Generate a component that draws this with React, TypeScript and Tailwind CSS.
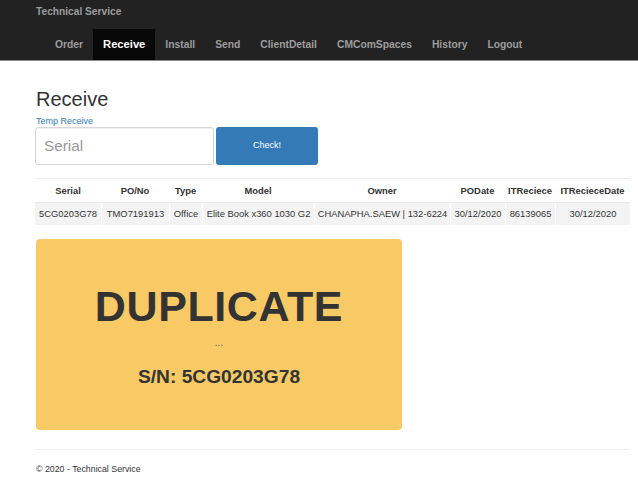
import React from "react";

const cols = [
  { h: "Serial", d: "5CG0203G78", w: 66 },
  { h: "PO/No", d: "TMO7191913", w: 68 },
  { h: "Type", d: "Office", w: 33 },
  { h: "Model", d: "Elite Book x360 1030 G2", w: 112 },
  { h: "Owner", d: "CHANAPHA.SAEW | 132-6224", w: 136 },
  { h: "PODate", d: "30/12/2020", w: 55 },
  { h: "ITReciece", d: "86139065", w: 50 },
  { h: "ITRecieceDate", d: "30/12/2020", w: 75 },
];

const navItems = ["Order", "Receive", "Install", "Send", "ClientDetail", "CMComSpaces", "History", "Logout"];

export default function App() {
  return (
    <div
      className="min-h-[482px] bg-white text-[#333]"
      style={{ fontFamily: '"Liberation Sans", Arial, sans-serif' }}
    >
      <nav className="h-[61px] bg-[#222] border-b border-[#8a8a8a]">
        <div className="pl-[36px] pt-[6px] h-[18px] text-[10.2px] leading-[12px] font-bold text-[#9d9d9d]">
          Technical Service
        </div>
        <ul className="flex ml-[45px] mt-[11px]">
          {navItems.map((n) =>
            n === "Receive" ? (
              <li
                key={n}
                className="h-[31px] px-[10px] flex items-center bg-[#080808] text-white font-bold text-[11.2px]"
              >
                {n}
              </li>
            ) : (
              <li
                key={n}
                className="h-[31px] px-[10px] flex items-center text-[#9d9d9d] font-bold text-[10.3px]"
              >
                {n}
              </li>
            )
          )}
        </ul>
      </nav>

      <main className="pl-[35px] pr-[8px]">
        <h2 className="mt-[27px] text-[20px] leading-[22px] text-[#333] pl-[1px]">Receive</h2>
        <div className="mt-[6px] text-[9px] leading-[11px] text-[#337ab7] pl-[1px]">Temp Receive</div>
        <div className="flex h-[38px] gap-[2px]">
          <div className="w-[179px] h-full border border-[#d6d6d6] rounded-[3px] bg-white flex items-center pl-[8px] text-[15.3px] text-[#999] shadow-[inset_0_1px_1px_rgba(0,0,0,0.06)]">
            Serial
          </div>
          <button className="w-[102px] h-full rounded-[3px] bg-[#337ab7] text-white text-[9px] flex items-center justify-center">
            Check!
          </button>
        </div>
        <div className="mt-[13px] border-t border-[#eee]" />
        <div className="flex h-[23px] items-center pt-[1px]">
          {cols.map((c) => (
            <div
              key={c.h}
              style={{ width: c.w }}
              className="shrink-0 text-center font-bold text-[9.4px] whitespace-nowrap"
            >
              {c.h}
            </div>
          ))}
        </div>
        <div className="flex h-[23px] border-t border-[#e8e8e8]">
          {cols.map((c, i) => (
            <div
              key={c.h}
              style={{ width: c.w }}
              className={
                "shrink-0 h-full flex items-center justify-center bg-[#f3f3f3] text-[9.4px] whitespace-nowrap " +
                (i > 0 ? "border-l border-white" : "")
              }
            >
              {c.d}
            </div>
          ))}
        </div>
        <div className="mt-[14px] ml-[1px] w-[366px] h-[191px] rounded-[4px] bg-[#f7ca66] flex flex-col items-center text-[#333]">
          <div className="mt-[43px] text-[43px] leading-[48px] font-bold tracking-[0.6px]">DUPLICATE</div>
          <div className="mt-[7px] text-[10px] leading-[12px] text-[#555]">...</div>
          <div className="mt-[17px] text-[19.2px] leading-[22px] font-bold">S/N: 5CG0203G78</div>
        </div>
        <div className="mt-[19px] border-t border-[#eee]" />
        <footer className="mt-[14px] text-[8.8px] leading-[11px] pl-[1px]">© 2020 - Technical Service</footer>
      </main>
    </div>
  );
}
